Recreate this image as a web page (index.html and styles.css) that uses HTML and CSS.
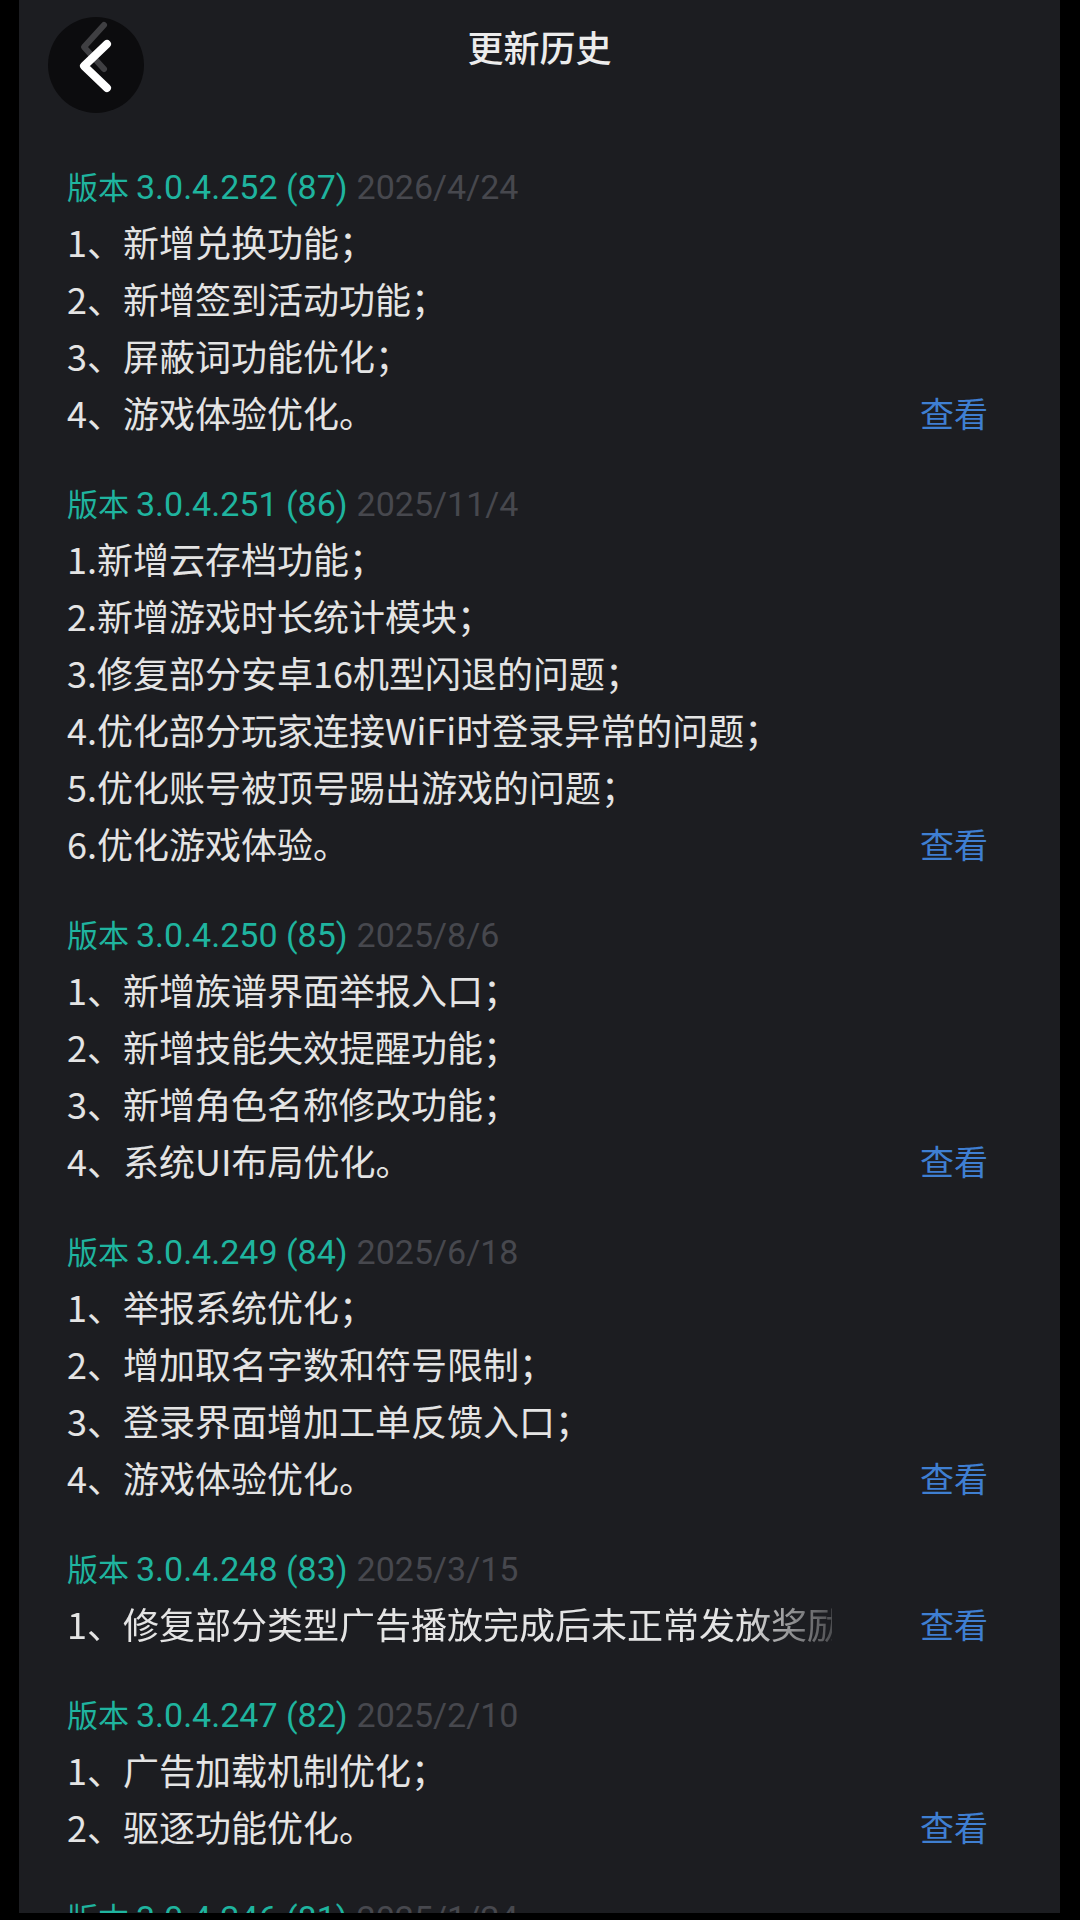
FILE: index.html
```html
<!DOCTYPE html>
<html lang="zh-CN">
<head>
<meta charset="utf-8">
<title>更新历史</title>
<link rel="stylesheet" href="styles.css">
</head>
<body>
<div class="panel">
  <header class="topbar">
    <div class="back">
      <svg class="chev" viewBox="0 0 96 96" width="96" height="96">
        <polyline class="ghost" points="56,8 36,30 56,52" />
        <polyline class="main" points="59,27 36,49 59,71" />
      </svg>
    </div>
    <h1 class="title">更新历史</h1>
    <div></div>
  </header>

  <main class="list">
    <section class="release">
      <div class="ver"><span class="num">版本 <span class="lat">3.0.4.252 (87)</span></span> <span class="date">2026/4/24</span></div>
      <div class="body">
        <div class="lines">
          <div class="line">1、新增兑换功能；</div>
          <div class="line">2、新增签到活动功能；</div>
          <div class="line">3、屏蔽词功能优化；</div>
          <div class="line">4、游戏体验优化。</div>
        </div>
        <a class="view">查看</a>
      </div>
    </section>

    <section class="release">
      <div class="ver"><span class="num">版本 <span class="lat">3.0.4.251 (86)</span></span> <span class="date">2025/11/4</span></div>
      <div class="body">
        <div class="lines">
          <div class="line">1.新增云存档功能；</div>
          <div class="line">2.新增游戏时长统计模块；</div>
          <div class="line">3.修复部分安卓16机型闪退的问题；</div>
          <div class="line">4.优化部分玩家连接WiFi时登录异常的问题；</div>
          <div class="line">5.优化账号被顶号踢出游戏的问题；</div>
          <div class="line">6.优化游戏体验。</div>
        </div>
        <a class="view">查看</a>
      </div>
    </section>

    <section class="release">
      <div class="ver"><span class="num">版本 <span class="lat">3.0.4.250 (85)</span></span> <span class="date">2025/8/6</span></div>
      <div class="body">
        <div class="lines">
          <div class="line">1、新增族谱界面举报入口；</div>
          <div class="line">2、新增技能失效提醒功能；</div>
          <div class="line">3、新增角色名称修改功能；</div>
          <div class="line">4、系统UI布局优化。</div>
        </div>
        <a class="view">查看</a>
      </div>
    </section>

    <section class="release">
      <div class="ver"><span class="num">版本 <span class="lat">3.0.4.249 (84)</span></span> <span class="date">2025/6/18</span></div>
      <div class="body">
        <div class="lines">
          <div class="line">1、举报系统优化；</div>
          <div class="line">2、增加取名字数和符号限制；</div>
          <div class="line">3、登录界面增加工单反馈入口；</div>
          <div class="line">4、游戏体验优化。</div>
        </div>
        <a class="view">查看</a>
      </div>
    </section>

    <section class="release">
      <div class="ver"><span class="num">版本 <span class="lat">3.0.4.248 (83)</span></span> <span class="date">2025/3/15</span></div>
      <div class="body">
        <div class="lines">
          <div class="line fade">1、修复部分类型广告播放完成后未正常发放奖励</div>
        </div>
        <a class="view">查看</a>
      </div>
    </section>

    <section class="release">
      <div class="ver"><span class="num">版本 <span class="lat">3.0.4.247 (82)</span></span> <span class="date">2025/2/10</span></div>
      <div class="body">
        <div class="lines">
          <div class="line">1、广告加载机制优化；</div>
          <div class="line">2、驱逐功能优化。</div>
        </div>
        <a class="view">查看</a>
      </div>
    </section>

    <section class="release">
      <div class="ver"><span class="num">版本 <span class="lat">3.0.4.246 (81)</span></span> <span class="date">2025/1/24</span></div>
      <div class="body">
        <div class="lines">
          <div class="line">1、游戏体验优化。</div>
        </div>
        <a class="view">查看</a>
      </div>
    </section>
  </main>
</div>
</body>
</html>
```

FILE: styles.css
```css
html, body {
  margin: 0;
  padding: 0;
  background: #000;
  width: 1080px;
  height: 1920px;
  overflow: hidden;
}

body {
  font-family: "Noto Sans CJK SC", "Noto Sans", sans-serif;
}

.panel {
  margin-left: 19px;
  width: 1041px;
  height: 1913px;
  background: #1c1d21;
  overflow: hidden;
}

.topbar {
  height: 124px;
  display: grid;
  grid-template-columns: 1fr auto 1fr;
  align-items: start;
}

.back {
  width: 96px;
  height: 96px;
  margin: 17px 0 0 29px;
  border-radius: 50%;
  background: #0c0c0e;
}

.chev {
  display: block;
}

.chev polyline {
  fill: none;
  stroke-linecap: round;
  stroke-linejoin: round;
}

.chev .ghost {
  stroke: #6a6a6e;
  stroke-width: 6;
  opacity: 0.55;
}

.chev .main {
  stroke: #ffffff;
  stroke-width: 8;
}

.title {
  margin: 21px 0 0;
  font-size: 36px;
  line-height: 50px;
  font-weight: 500;
  color: #ececec;
}

.list {
  padding-left: 48px;
}

.release {
  margin-top: 35px;
}

.ver {
  height: 54px;
  font-size: 31px;
  line-height: 54px;
  white-space: nowrap;
}

.ver .lat,
.ver .date {
  font-family: Roboto, "Noto Sans CJK SC", sans-serif;
  font-size: 34px;
  line-height: 1;
}

.ver .num {
  color: #1fb49f;
}

.ver .date {
  color: #47484e;
  margin-left: 2px;
}

.body {
  display: flex;
  align-items: flex-end;
}

.lines {
  width: 765px;
}

.line {
  font-size: 36px;
  line-height: 57px;
  color: #e4e4e4;
  white-space: nowrap;
  overflow: hidden;
}

.line.fade {
  -webkit-mask-image: linear-gradient(to right, #000 675px, rgba(0,0,0,0.25) 765px);
  mask-image: linear-gradient(to right, #000 675px, rgba(0,0,0,0.25) 765px);
}

.view {
  margin-left: 88px;
  font-size: 34px;
  line-height: 57px;
  color: #3f7fd2;
}
```
